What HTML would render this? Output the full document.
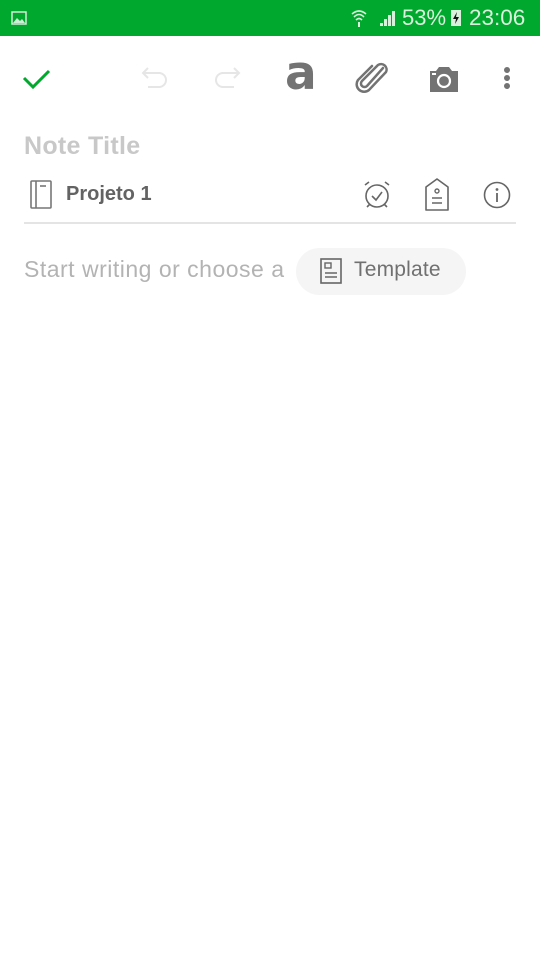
<!DOCTYPE html>
<html><head><meta charset="utf-8"><style>
body{margin:0;width:540px;height:960px;background:#fff;font-family:"Liberation Sans",sans-serif;position:relative;overflow:hidden}
.abs{position:absolute}
</style></head><body>
<div class="abs" style="left:0;top:0;width:540px;height:36px;background:#00a82d"></div>
<svg class="abs" style="left:11px;top:11px" width="16" height="14"><rect x="1" y="1" width="14" height="12" fill="none" stroke="#cfeed6" stroke-width="1.5"/><path d="M2 12 L6 7 L9 10 L11 8 L14 12Z" fill="#cfeed6"/></svg>
<svg class="abs" style="left:350px;top:8px" width="50" height="20"><path d="M2 6 Q9 0 16 6 M4 9 Q9 4 14 9 M6 12 Q9 9 12 12" stroke="#d8f0dc" stroke-width="1.6" fill="none"/><rect x="8" y="14" width="2" height="5" fill="#d8f0dc"/><path d="M30 18h3v-3h-3z M34 18h3v-7h-3z M38 18h3v-11h-3z M42 18h3v-15h-3z" fill="#d8f0dc"/></svg>
<div class="abs" style="left:402px;top:5px;font-size:22px;color:#d8f0dc">53%</div>
<svg class="abs" style="left:450px;top:9px" width="12" height="18"><rect x="1" y="1" width="10" height="16" fill="#d8f0dc"/><path d="M7 3 L3 10 H6 L5 15 L9 8 H6Z" fill="#111"/></svg>
<div class="abs" style="left:469px;top:5px;font-size:22.5px;color:#d8f0dc">23:06</div>

<svg class="abs" style="left:22px;top:66px" width="30" height="24"><path d="M2 12 L11 21 L27 5" stroke="#00a82d" stroke-width="3" fill="none"/></svg>
<svg class="abs" style="left:140px;top:64px" width="32" height="30"><path d="M8 4 L3 9 L8 14 M3 9 H19 A7 7 0 0 1 19 23 H8" stroke="#e6e6e6" stroke-width="2" fill="none"/></svg>
<svg class="abs" style="left:210px;top:64px" width="32" height="30"><path d="M24 4 L29 9 L24 14 M29 9 H13 A7 7 0 0 0 13 23 H24" stroke="#e6e6e6" stroke-width="2" fill="none"/></svg>
<div class="abs" style="left:285px;top:46px;font-size:47px;font-weight:bold;color:#737373;font-family:'DejaVu Sans',sans-serif">a</div>
<svg class="abs" style="left:355px;top:62px" width="36" height="32"><path d="M28 6 L12 24 A3.5 3.5 0 0 1 7 19 L23 3 A5.5 5.5 0 0 1 31 10 L14 28 A7.5 7.5 0 0 1 3 18 L17 4" stroke="#737373" stroke-width="2.5" fill="none" stroke-linecap="round"/></svg>
<svg class="abs" style="left:428px;top:65px" width="32" height="28"><path d="M2 6 H8 L11 2 H21 L24 6 H30 V27 H2Z" fill="#737373"/><circle cx="16" cy="16" r="6" fill="none" stroke="#fff" stroke-width="2.2"/><rect x="4" y="8" width="4" height="2" fill="#fff"/></svg>
<svg class="abs" style="left:502px;top:66px" width="10" height="26"><circle cx="5" cy="4" r="3" fill="#737373"/><circle cx="5" cy="12" r="3" fill="#737373"/><circle cx="5" cy="20" r="3" fill="#737373"/></svg>

<div class="abs" style="left:24px;top:132px;font-size:25px;font-weight:bold;color:#c8c8c8;letter-spacing:0.3px">Note Title</div>
<svg class="abs" style="left:30px;top:180px" width="24" height="30"><rect x="1" y="1" width="20" height="27" rx="1" fill="none" stroke="#777" stroke-width="1.6"/><line x1="6" y1="1" x2="6" y2="28" stroke="#777" stroke-width="1.6"/><line x1="10" y1="6" x2="16" y2="6" stroke="#777" stroke-width="1.6"/></svg>
<div class="abs" style="left:66px;top:183px;font-size:20px;font-weight:bold;color:#636363">Projeto 1</div>
<svg class="abs" style="left:362px;top:180px" width="30" height="30"><circle cx="15" cy="16" r="11" fill="none" stroke="#666" stroke-width="1.6"/><path d="M10 16 L14 20 L20 12" stroke="#666" stroke-width="1.6" fill="none"/><path d="M3 5 L7 2 M27 5 L23 2 M5 27 L8 24 M25 27 L22 24" stroke="#666" stroke-width="1.6"/></svg>
<svg class="abs" style="left:424px;top:178px" width="26" height="34"><path d="M13 1 L24 9 V32 H2 V9Z" fill="none" stroke="#666" stroke-width="1.6" stroke-linejoin="round"/><circle cx="13" cy="13" r="2" fill="none" stroke="#666" stroke-width="1.4"/><path d="M8 20 H18 M8 25 H18" stroke="#666" stroke-width="1.6"/></svg>
<svg class="abs" style="left:483px;top:181px" width="30" height="30"><circle cx="14" cy="14" r="12.5" fill="none" stroke="#666" stroke-width="1.6"/><circle cx="14" cy="8.5" r="1.4" fill="#666"/><path d="M14 12 V21" stroke="#666" stroke-width="1.8"/></svg>
<div class="abs" style="left:24px;top:222px;width:492px;height:2px;background:#e4e4e4"></div>

<div class="abs" style="left:24px;top:256px;font-size:23px;letter-spacing:0.5px;color:#b3b3b3;white-space:nowrap">Start writing or choose a</div>
<div class="abs" style="left:296px;top:248px;width:170px;height:47px;border-radius:24px;background:#f5f5f5"></div>
<svg class="abs" style="left:320px;top:258px" width="24" height="28"><rect x="1" y="1" width="20" height="24" fill="none" stroke="#666" stroke-width="1.6"/><rect x="5" y="5" width="6" height="5" fill="none" stroke="#666" stroke-width="1.4"/><path d="M5 15 H17 M5 19 H17" stroke="#666" stroke-width="1.6"/></svg>
<div class="abs" style="left:354px;top:258px;font-size:21px;color:#707070;letter-spacing:0.2px">Template</div>
</body></html>
